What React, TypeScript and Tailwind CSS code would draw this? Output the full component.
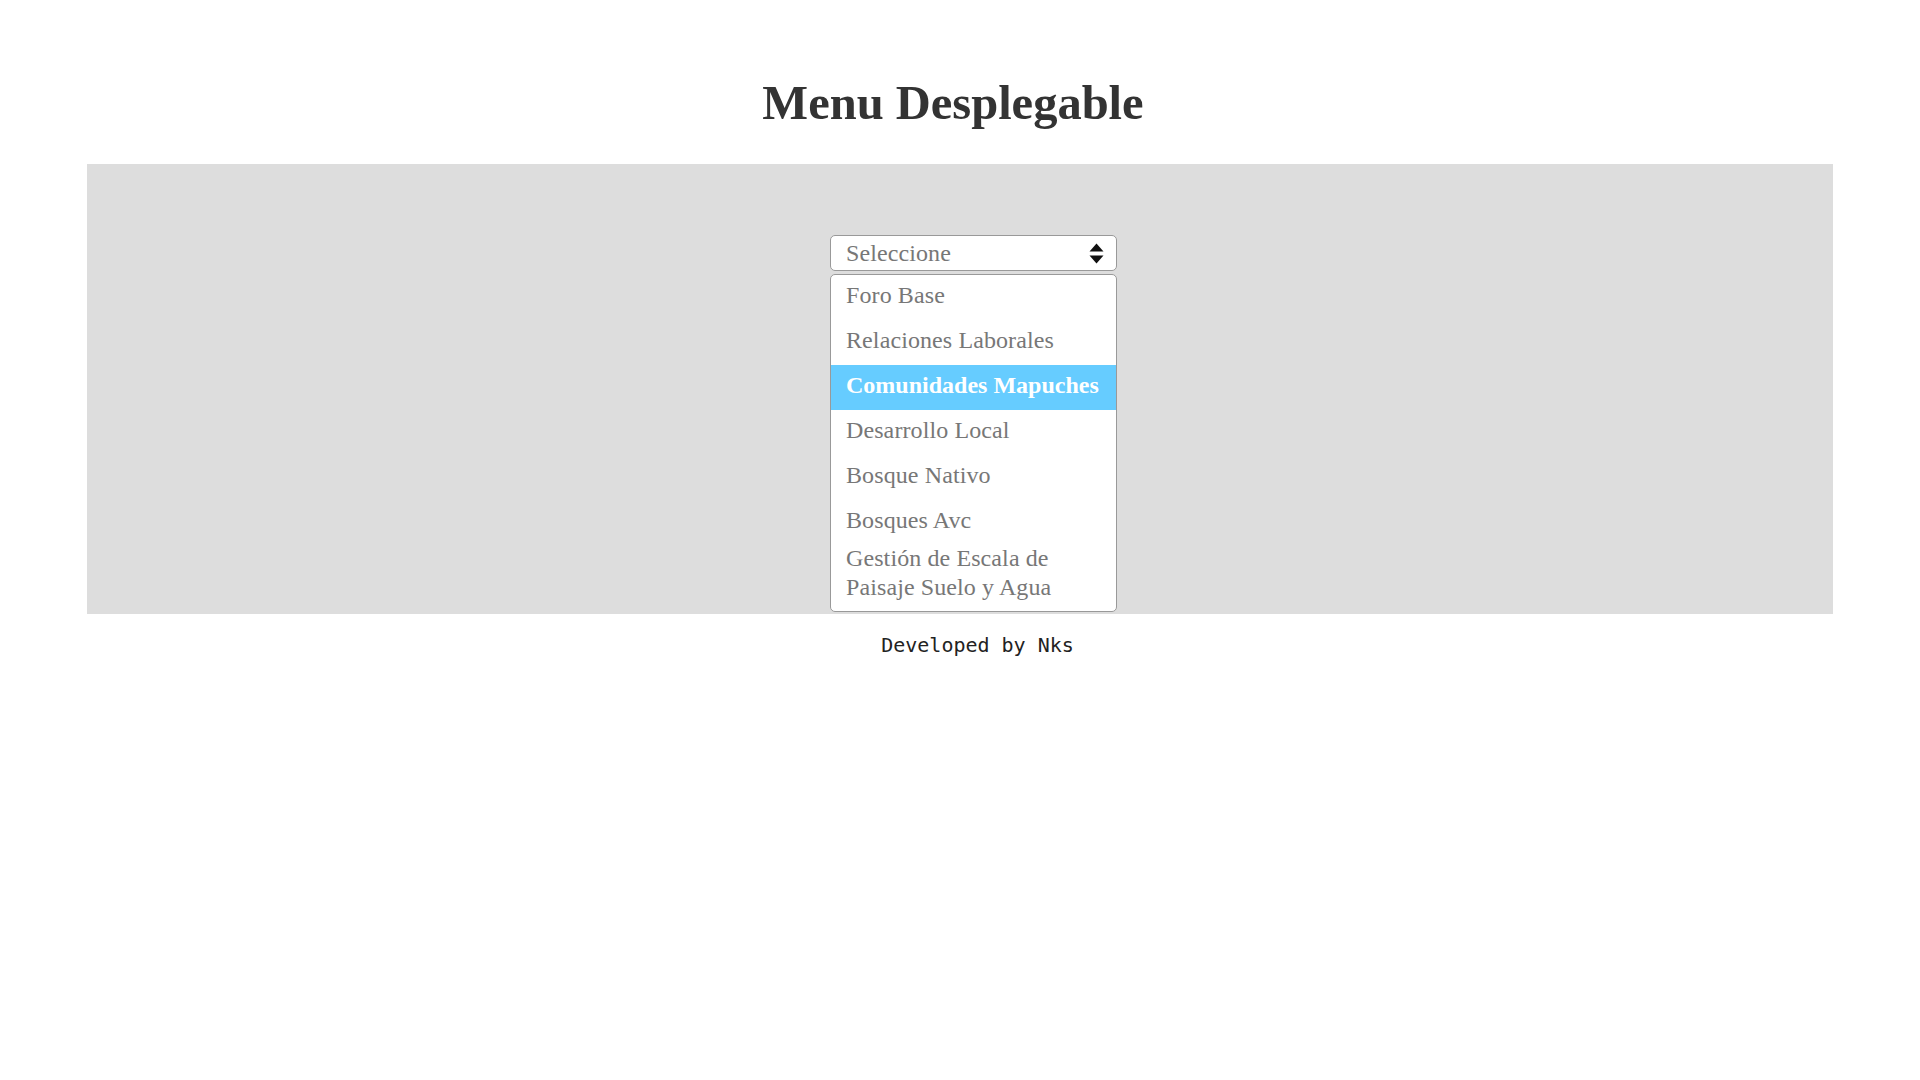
import React from "react";

const items = [
  "Foro Base",
  "Relaciones Laborales",
  "Comunidades Mapuches",
  "Desarrollo Local",
  "Bosque Nativo",
  "Bosques Avc",
];

export default function App() {
  return (
    <div className="min-h-screen bg-white">
      <h1 className="pt-[75px] pb-[33px] pr-[14px] text-center font-['Liberation_Serif',serif] text-[48.5px] leading-[56px] font-bold text-[#333]">
        Menu Desplegable
      </h1>
      <div className="mx-auto flex h-[450px] w-[1746px] flex-col items-center bg-[#dddddd] pt-[71px] pl-[27px] font-['Liberation_Serif',serif] text-[24px] text-[#777]">
        <div className="flex h-[36px] w-[287px] items-center justify-between rounded-[5px] border border-[#999] bg-white pl-[15px] pr-[12px]">
          <span className="leading-[29px] tracking-[0.1px]">Seleccione</span>
          <svg width="15" height="23" viewBox="0 0 15 23" className="block">
            <polygon points="0.5,9.5 7.5,1.5 14.5,9.5" fill="#111" />
            <polygon points="0.5,13.5 7.5,21.5 14.5,13.5" fill="#111" />
          </svg>
        </div>
        <ul className="mt-[3px] w-[287px] overflow-hidden rounded-[5px] border border-[#999] bg-white">
          {items.map((it, i) => (
            <li
              key={it}
              className={
                i === 2
                  ? "h-[45px] whitespace-nowrap bg-[#66ccff] pl-[15px] pt-[6px] leading-[29px] font-bold text-white"
                  : i === 5
                  ? "h-[43px] whitespace-nowrap pl-[15px] pt-[6px] leading-[29px] tracking-[0.1px]"
                  : "h-[45px] whitespace-nowrap pl-[15px] pt-[6px] leading-[29px] tracking-[0.1px]"
              }
            >
              {it}
            </li>
          ))}
          <li className="pl-[15px] pr-[10px] pt-[1px] pb-[9px] leading-[29px] tracking-[0.1px]">
            Gestión de Escala de Paisaje Suelo y Agua
          </li>
        </ul>
      </div>
      <p className="mt-[19px] pl-[35px] text-center font-['DejaVu_Sans_Mono',monospace] text-[20px] leading-[24px] text-[#222]">
        Developed by Nks
      </p>
    </div>
  );
}
